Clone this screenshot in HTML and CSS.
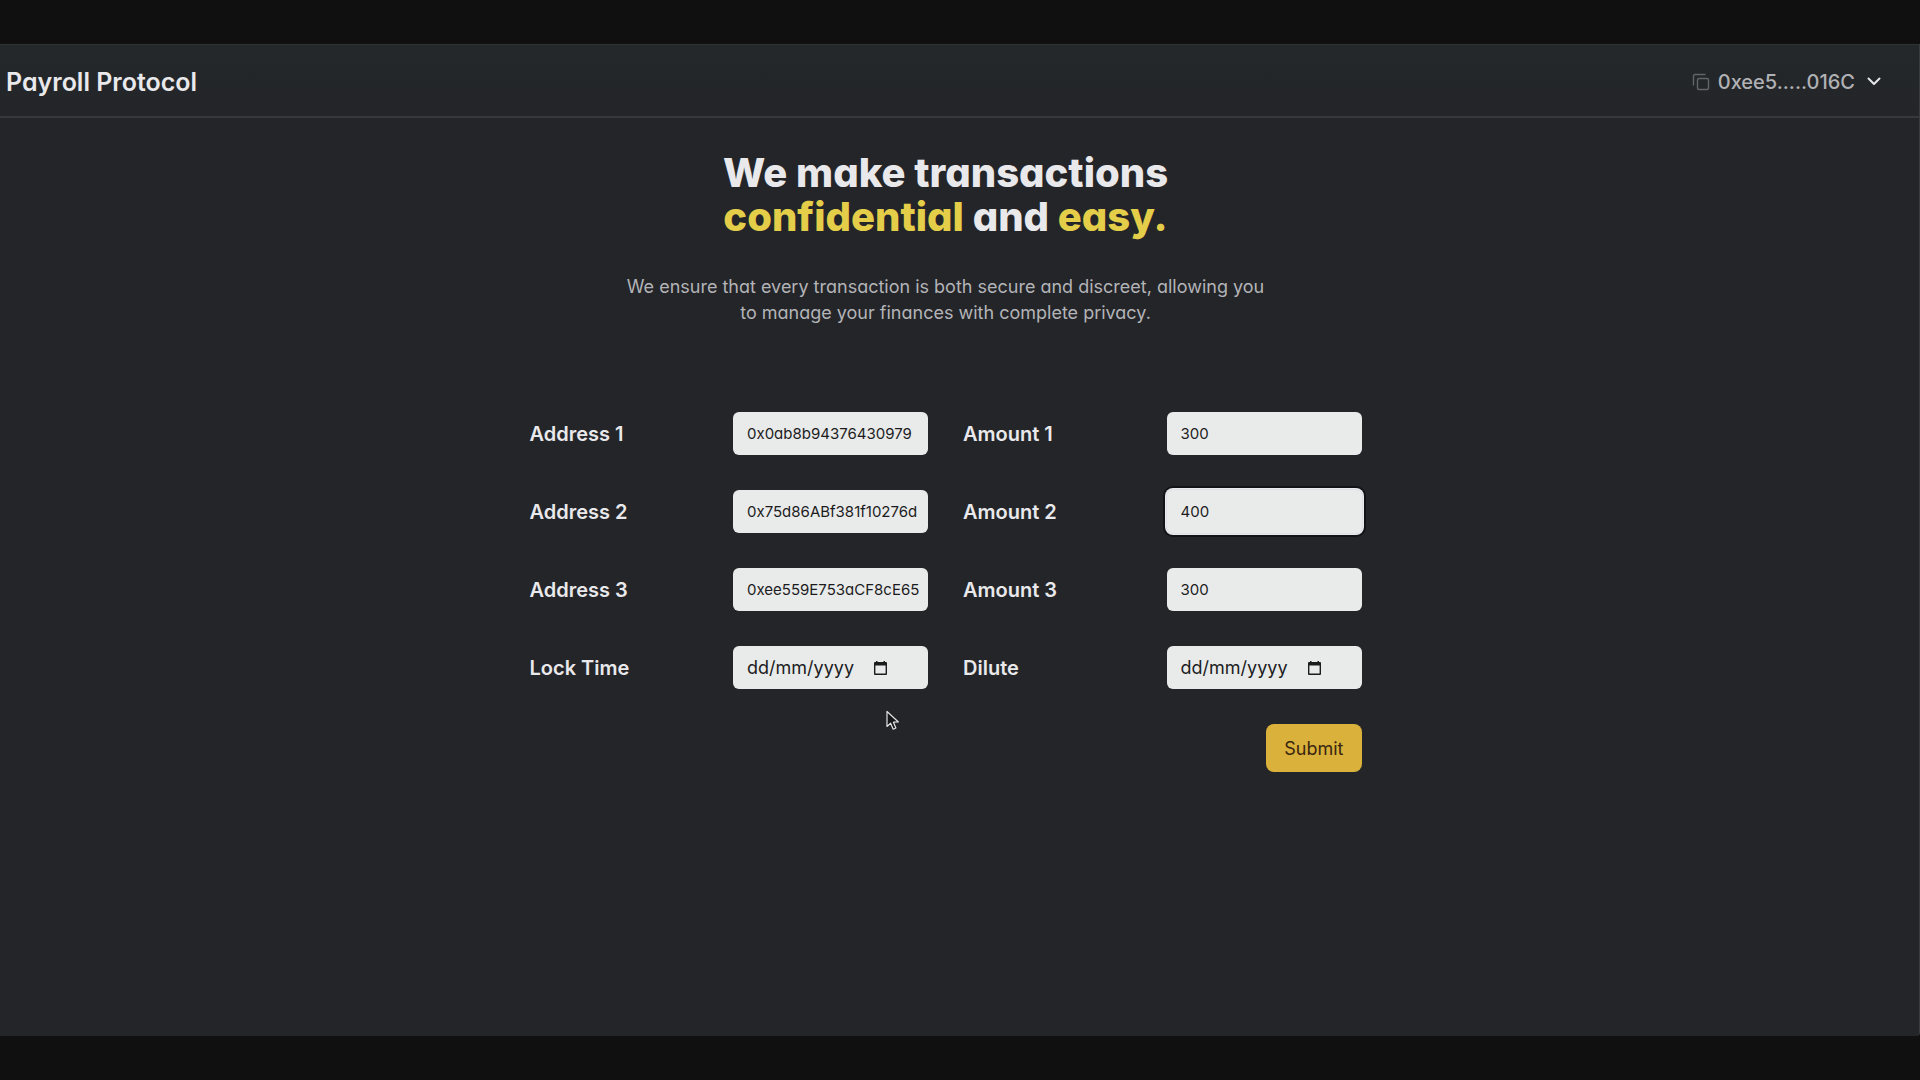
FILE: index.html
```html
<!DOCTYPE html>
<html lang="en">
<head>
    <meta charset="UTF-8">
    <meta name="viewport" content="width=device-width, initial-scale=1.0">
    <title>Payroll Protocol</title>
    <link rel="stylesheet" href="styles.css">
</head>
<body>
    <div class="app">
        <header class="navbar">
            <a class="brand" href="#">Payroll Protocol</a>
            <div class="wallet">
                <button type="button" class="icon-btn" aria-label="Copy address">
                    <svg width="18" height="18" viewBox="0 0 18 18" fill="none" stroke="#626468" stroke-width="1.4">
                        <rect x="5.5" y="5.5" width="11" height="11" rx="1.5"/>
                        <path d="M1.5 12.5V3Q1.5 1.5 3 1.5H13.5"/>
                    </svg>
                </button>
                <button type="button" class="account">
                    <span>0xee5.....016C</span>
                    <svg width="14" height="9" viewBox="0 0 14 9" fill="none" stroke="#e6e6e8" stroke-width="2" stroke-linecap="round" stroke-linejoin="round">
                        <path d="M1.5 1.5L7 7L12.5 1.5"/>
                    </svg>
                </button>
            </div>
        </header>

        <main class="content">
            <h1>We make transactions<br><span class="accent">confidential</span> and <span class="accent">easy.</span></h1>
            <p class="intro">We ensure that every transaction is both secure and discreet, allowing you<br>to manage your finances with complete privacy.</p>

            <form class="payroll-form" id="payrollForm">
                <div class="field">
                    <label for="address1">Address 1</label>
                    <input type="text" id="address1" value="0x0ab8b94376430979">
                </div>
                <div class="field">
                    <label for="amount1">Amount 1</label>
                    <input type="text" id="amount1" inputmode="numeric" value="300">
                </div>
                <div class="field">
                    <label for="address2">Address 2</label>
                    <input type="text" id="address2" value="0x75d86ABf381f10276d">
                </div>
                <div class="field">
                    <label for="amount2">Amount 2</label>
                    <input type="text" id="amount2" class="active" inputmode="numeric" value="400">
                </div>
                <div class="field">
                    <label for="address3">Address 3</label>
                    <input type="text" id="address3" value="0xee559E753aCF8cE65">
                </div>
                <div class="field">
                    <label for="amount3">Amount 3</label>
                    <input type="text" id="amount3" inputmode="numeric" value="300">
                </div>
                <div class="field">
                    <label for="lockTime">Lock Time</label>
                    <div class="date-box">
                        <input type="text" id="lockTime" placeholder="dd/mm/yyyy">
                        <button type="button" class="icon-btn" aria-label="Pick lock time">
                            <svg width="13" height="14" viewBox="0 0 13 14">
                                <path fill="#1c1c1e" fill-rule="evenodd" d="M2 0H3.5V1H9.5V0H11V1H12Q13 1 13 2V13Q13 14 12 14H1Q0 14 0 13V2Q0 1 1 1H2ZM1.4 4.4V12.6H11.6V4.4Z"/>
                            </svg>
                        </button>
                    </div>
                </div>
                <div class="field">
                    <label for="dilute">Dilute</label>
                    <div class="date-box">
                        <input type="text" id="dilute" placeholder="dd/mm/yyyy">
                        <button type="button" class="icon-btn" aria-label="Pick dilute date">
                            <svg width="13" height="14" viewBox="0 0 13 14">
                                <path fill="#1c1c1e" fill-rule="evenodd" d="M2 0H3.5V1H9.5V0H11V1H12Q13 1 13 2V13Q13 14 12 14H1Q0 14 0 13V2Q0 1 1 1H2ZM1.4 4.4V12.6H11.6V4.4Z"/>
                            </svg>
                        </button>
                    </div>
                </div>
                <button type="submit" class="submit-btn">Submit</button>
            </form>
        </main>
    </div>

    <!-- Mouse pointer -->
    <svg class="pointer" width="14" height="21" viewBox="0 0 14 21">
        <path fill="#17181a" stroke="#e4e4e6" stroke-width="1.2" stroke-linejoin="round" d="M1 1.5V16.5L4.6 13.2L7.2 19.2L9.9 18L7.4 12.2L12.4 12Z"/>
    </svg>
</body>
</html>
```
FILE: styles.css
```css
* { box-sizing: border-box; }

body {
    display: flex;
    min-height: 100vh;
    margin: 0;
    padding: 44px 0;
    background-color: #101010;
    color: #e9e9ec;
    font-family: Inter, "Liberation Sans", sans-serif;
    font-feature-settings: "cv11"; /* single-storey a */
}

input, button { font: inherit; font-feature-settings: inherit; }
button { padding: 0; border: none; background: none; color: inherit; cursor: pointer; }

.app {
    flex: 1;
    background-color: #242529;
    border-right: 1px solid #3a3b3e;
    border-bottom-right-radius: 4px;
}

/* Navbar */
.navbar {
    display: flex;
    align-items: center;
    justify-content: space-between;
    height: 74px;
    padding: 2px 38px 0 6px;
    border-top: 1px solid #2e3333;
    border-bottom: 2px solid #37383b;
    background-image: linear-gradient(#23282a, #242529);
}
.brand { color: #e9e9ec; font-size: 25px; font-weight: 600; text-decoration: none; }
.wallet { display: flex; align-items: center; gap: 8px; }
.icon-btn { display: flex; }
.account {
    display: flex;
    align-items: center;
    gap: 12px;
    color: #b0b1b4;
    font-size: 20px;
    font-weight: 500;
}
.account svg { display: block; }

/* Hero */
.content {
    display: flex;
    flex-direction: column;
    align-items: center;
    padding: 33px 28px 0 0;
}
h1 { margin: 0; font-size: 40px; line-height: 44px; font-weight: 800; text-align: center; }
.accent { color: #e3cd49; }
.intro { margin: 35px 0 0; color: #b3b4b7; font-size: 18px; line-height: 26px; text-align: center; }

/* Form */
.payroll-form {
    display: grid;
    grid-template-columns: 1fr 1fr;
    gap: 35px;
    width: 100%;
    max-width: 832px;
    margin-top: 86px;
}
.field { display: flex; align-items: center; justify-content: space-between; }
.field label { font-size: 20px; font-weight: 600; }
.field > input, .date-box {
    width: 195px;
    height: 43px;
    padding: 0 9px 0 14px;
    border: none;
    border-radius: 6px;
    background-color: #e9ebea;
    color: #1c1c1e;
    font-size: 15px;
}
.field > input { outline: none; }
.field > input.active { box-shadow: 0 0 0 1px #dfe0ea, 0 0 0 2px #e9ebea, 0 0 0 4px #121316; }
.date-box { display: flex; align-items: center; }
.date-box input {
    width: 127px;
    padding: 0;
    border: none;
    outline: none;
    background: none;
    color: #1c1c1e;
    font-size: 18px;
}
.date-box input::placeholder { color: #1c1c1e; opacity: 1; }

.submit-btn {
    grid-column: 2;
    justify-self: end;
    height: 48px;
    padding: 0 18px;
    border-radius: 8px;
    background-color: #d9b13b;
    color: #3a2510;
    font-size: 18px;
}

.pointer { position: absolute; left: 886px; top: 710px; }
```
